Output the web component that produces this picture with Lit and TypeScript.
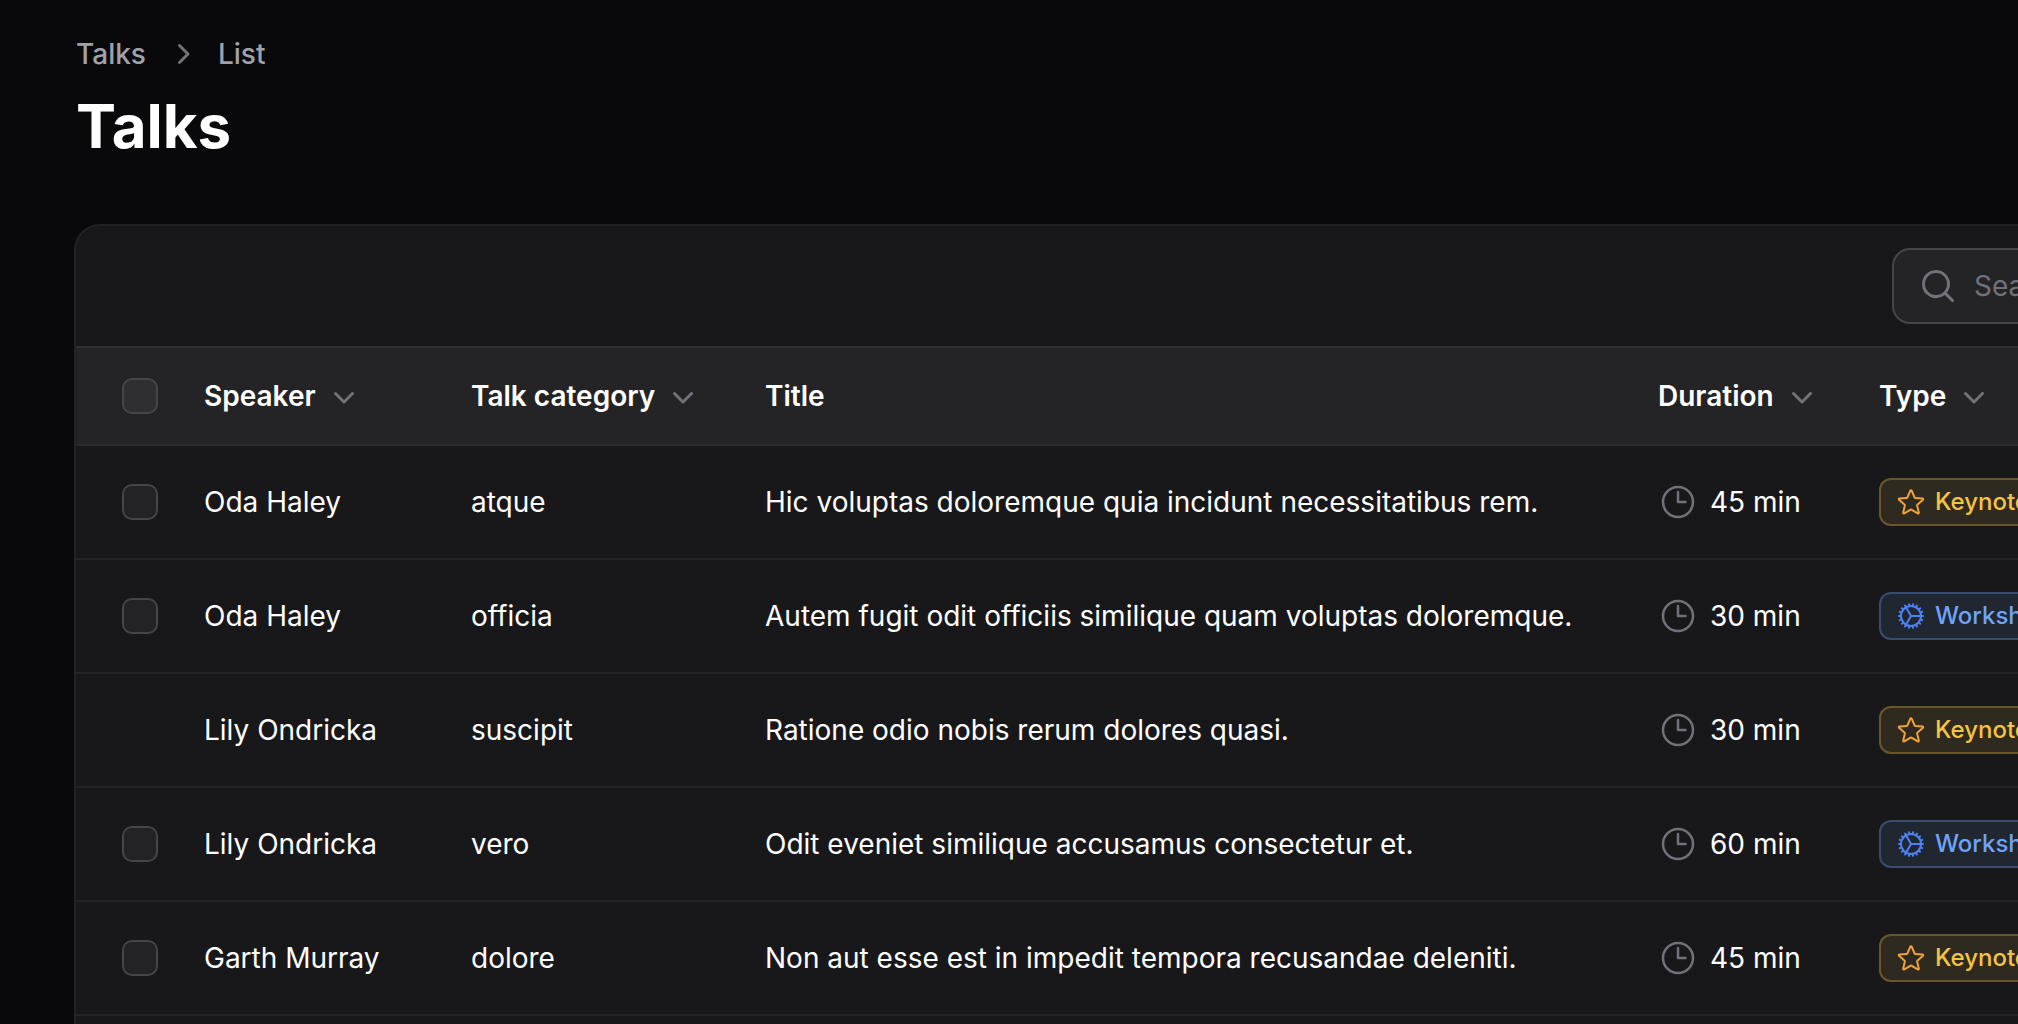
import { LitElement, html, css, svg, type SVGTemplateResult } from "lit";
import { customElement, property } from "lit/decorators.js";
import { classMap } from "lit/directives/class-map.js";

type TalkType = "keynote" | "workshop";

interface Talk {
  speaker: string;
  category: string;
  title: string;
  minutes: number;
  type: TalkType;
  selectable: boolean;
}

const TALKS: Talk[] = [
  { speaker: "Oda Haley", category: "atque", title: "Hic voluptas doloremque quia incidunt necessitatibus rem.", minutes: 45, type: "keynote", selectable: true },
  { speaker: "Oda Haley", category: "officia", title: "Autem fugit odit officiis similique quam voluptas doloremque.", minutes: 30, type: "workshop", selectable: true },
  { speaker: "Lily Ondricka", category: "suscipit", title: "Ratione odio nobis rerum dolores quasi.", minutes: 30, type: "keynote", selectable: false },
  { speaker: "Lily Ondricka", category: "vero", title: "Odit eveniet similique accusamus consectetur et.", minutes: 60, type: "workshop", selectable: true },
  { speaker: "Garth Murray", category: "dolore", title: "Non aut esse est in impedit tempora recusandae deleniti.", minutes: 45, type: "keynote", selectable: true },
];

const TYPE_LABELS: Record<TalkType, string> = { keynote: "Keynote", workshop: "Workshop" };

/* Outline icons live on a 24 unit grid, solid ones on a 20 unit grid. */
const OUTLINE: Record<string, SVGTemplateResult> = {
  clock: svg`<path d="M12 6v6h4.5m4.5 0a9 9 0 1 1-18 0 9 9 0 0 1 18 0Z"/>`,
  keynote: svg`<path d="M11.48 3.499a.562.562 0 0 1 1.04 0l2.125 5.111a.563.563 0 0 0 .475.345l5.518.442c.499.04.701.663.321.988l-4.204 3.602a.563.563 0 0 0-.182.557l1.285 5.385a.562.562 0 0 1-.84.61l-4.725-2.885a.562.562 0 0 0-.586 0L6.982 20.54a.562.562 0 0 1-.84-.61l1.285-5.386a.562.562 0 0 0-.182-.557l-4.204-3.602a.562.562 0 0 1 .321-.988l5.518-.442a.563.563 0 0 0 .475-.345L11.48 3.5Z"/>`,
  workshop: svg`<path d="M4.5 12a7.5 7.5 0 0 0 15 0m-15 0a7.5 7.5 0 1 1 15 0m-15 0H3m16.5 0H21m-1.5 0H12m-8.457 3.077 1.41-.513m14.095-5.13 1.41-.513M5.106 17.785l1.15-.964m11.49-9.642 1.149-.964M7.501 19.795l.75-1.3m7.5-12.99.75-1.3m-6.063 16.658.26-1.477m2.605-14.772.26-1.477m0 17.726-.26-1.477M10.698 4.614l-.26-1.477M16.5 19.794l-.75-1.299M7.5 4.205 12 12m6.894 5.785-1.149-.964M6.256 7.178l-1.15-.964m15.352 8.864-1.41-.513M4.954 9.435l-1.41-.514M12.002 12l-3.75 6.495"/>`,
};

const SOLID: Record<string, SVGTemplateResult> = {
  search: svg`<path fill-rule="evenodd" d="M9 3.5a5.5 5.5 0 1 0 0 11 5.5 5.5 0 0 0 0-11ZM2 9a7 7 0 1 1 12.452 4.391l3.328 3.329a.75.75 0 1 1-1.06 1.06l-3.329-3.328A7 7 0 0 1 2 9Z"/>`,
  right: svg`<path d="M8.22 5.22a.75.75 0 0 1 1.06 0l4.25 4.25a.75.75 0 0 1 0 1.06l-4.25 4.25a.75.75 0 0 1-1.06-1.06L11.94 10 8.22 6.28a.75.75 0 0 1 0-1.06Z"/>`,
  down: svg`<path d="M5.22 8.22a.75.75 0 0 1 1.06 0L10 11.94l3.72-3.72a.75.75 0 1 1 1.06 1.06l-4.25 4.25a.75.75 0 0 1-1.06 0L5.22 9.28a.75.75 0 0 1 0-1.06Z"/>`,
};

@customElement("ui-icon")
export class UiIcon extends LitElement {
  @property() name = "";

  static styles = css`
    :host { display: block; flex: none; width: 40px; height: 40px; }
    svg { display: block; width: 100%; height: 100%; }
    .outline { fill: none; stroke: currentColor; stroke-width: 1.5; stroke-linecap: round; stroke-linejoin: round; }
    .solid { fill: currentColor; }
  `;

  render() {
    return this.name in SOLID
      ? html`<svg class="solid" viewBox="0 0 20 20" aria-hidden="true">${SOLID[this.name]}</svg>`
      : html`<svg class="outline" viewBox="0 0 24 24" aria-hidden="true">${OUTLINE[this.name]}</svg>`;
  }
}

@customElement("type-badge")
export class TypeBadge extends LitElement {
  @property() type: TalkType = "keynote";

  static styles = css`
    :host { display: flex; }
    .badge {
      display: flex;
      align-items: center;
      gap: 8px;
      box-sizing: border-box;
      height: 48px;
      padding: 0 16px;
      border-radius: 12px;
      font-size: 24px;
      font-weight: 500;
      line-height: 32px;
    }
    .icon { width: 32px; height: 32px; }
    .keynote { background: #2f2a20; color: #f5c344; box-shadow: inset 0 0 0 2px #6b552b; }
    .keynote .icon { color: #f0a13a; }
    .workshop { background: #212730; color: #6fa3f6; box-shadow: inset 0 0 0 2px #384c70; }
    .workshop .icon { color: #4c82f4; }
  `;

  render() {
    return html`<span class=${classMap({ badge: true, [this.type]: true })}>
      <ui-icon class="icon" name=${this.type}></ui-icon>${TYPE_LABELS[this.type]}
    </span>`;
  }
}

@customElement("app-root")
export class AppRoot extends LitElement {
  static styles = css`
    :host {
      display: block;
      box-sizing: border-box;
      height: 100vh;
      overflow: hidden;
      background: #09090b;
      color: #fff;
      font-family: Inter, "Liberation Sans", sans-serif;
      font-size: 28px;
      line-height: 40px;
    }
    .page {
      display: flex;
      flex-direction: column;
      box-sizing: border-box;
      min-height: 100%;
      padding: 34px 0 0 76px;
    }
    .header { display: flex; flex-direction: column; gap: 16px; margin-bottom: 64px; }
    .crumbs { display: flex; align-items: center; gap: 16px; margin: 0; padding: 0; list-style: none; }
    .crumb { display: flex; align-items: center; gap: 16px; }
    .crumb a { color: #a1a1aa; font-weight: 500; text-decoration: none; }
    .crumb ui-icon { color: #71717a; }
    .heading { margin: 0; font-size: 60px; font-weight: 700; line-height: 72px; }

    .card {
      flex: 1;
      width: max-content;
      min-width: 100%;
      border-radius: 24px 24px 0 0;
      background: #18181b;
      box-shadow: 0 0 0 2px #222225;
    }
    .toolbar { display: flex; justify-content: flex-end; padding: 24px 48px; }
    .search {
      display: flex;
      align-items: center;
      gap: 16px;
      box-sizing: border-box;
      width: 432px;
      height: 72px;
      padding: 0 24px;
      border-radius: 16px;
      background: #242426;
      box-shadow: 0 0 0 2px #464648;
      color: #71717a;
    }
    .search input {
      flex: 1;
      min-width: 0;
      padding: 0;
      border: 0;
      outline: 0;
      background: none;
      color: #fff;
      font: inherit;
    }
    .search input::placeholder { color: #71717a; opacity: 1; }

    .table { width: 100%; border-collapse: separate; border-spacing: 0; text-align: left; }
    .table th, .table td { box-sizing: border-box; padding: 0 24px; border-bottom: 2px solid #242426; white-space: nowrap; }
    .table th { height: 100px; border-top: 2px solid #2f2f31; border-bottom-color: #2b2b2e; background: #242426; font-weight: 600; }
    .table td { height: 114px; }
    .table .select { padding-left: 48px; }
    .col-select { width: 104px; }
    .col-speaker { width: 267px; }
    .col-category { width: 294px; }
    .col-title { width: 893px; }
    .col-duration { width: 221px; }
    .col-type { width: 519px; }

    .sort {
      display: flex;
      align-items: center;
      gap: 8px;
      padding: 0;
      border: 0;
      background: none;
      color: inherit;
      font: inherit;
      cursor: pointer;
    }
    .sort ui-icon { color: #71717a; }
    .check {
      display: block;
      appearance: none;
      width: 32px;
      height: 32px;
      margin: 0;
      border-radius: 8px;
      background: rgb(255 255 255 / 5%);
      box-shadow: 0 0 0 2px #464648;
    }
    .check:checked { background: #f59e0b; }
    .duration { display: flex; align-items: center; gap: 12px; }
    .duration ui-icon { color: #71717a; }
  `;

  private sortable(label: string) {
    return html`<button class="sort" type="button">${label}<ui-icon name="down"></ui-icon></button>`;
  }

  private row(talk: Talk) {
    return html`<tr>
      <td class="select">
        ${talk.selectable ? html`<input class="check" type="checkbox" aria-label="Select ${talk.title}" />` : null}
      </td>
      <td>${talk.speaker}</td>
      <td>${talk.category}</td>
      <td>${talk.title}</td>
      <td><span class="duration"><ui-icon name="clock"></ui-icon>${talk.minutes} min</span></td>
      <td><type-badge type=${talk.type}></type-badge></td>
    </tr>`;
  }

  render() {
    return html`<main class="page">
      <header class="header">
        <nav aria-label="Breadcrumb">
          <ol class="crumbs">
            <li class="crumb"><a href="#talks">Talks</a></li>
            <li class="crumb"><ui-icon name="right"></ui-icon><a href="#list">List</a></li>
          </ol>
        </nav>
        <h1 class="heading">Talks</h1>
      </header>
      <section class="card">
        <div class="toolbar">
          <label class="search">
            <ui-icon name="search"></ui-icon>
            <input type="search" placeholder="Search" aria-label="Search" />
          </label>
        </div>
        <table class="table">
          <colgroup>
            <col class="col-select" />
            <col class="col-speaker" />
            <col class="col-category" />
            <col class="col-title" />
            <col class="col-duration" />
            <col class="col-type" />
          </colgroup>
          <thead>
            <tr>
              <th class="select" scope="col"><input class="check" type="checkbox" aria-label="Select all talks" /></th>
              <th scope="col">${this.sortable("Speaker")}</th>
              <th scope="col">${this.sortable("Talk category")}</th>
              <th scope="col">Title</th>
              <th scope="col">${this.sortable("Duration")}</th>
              <th scope="col">${this.sortable("Type")}</th>
            </tr>
          </thead>
          <tbody>
            ${TALKS.map((talk) => this.row(talk))}
          </tbody>
        </table>
      </section>
    </main>`;
  }
}
